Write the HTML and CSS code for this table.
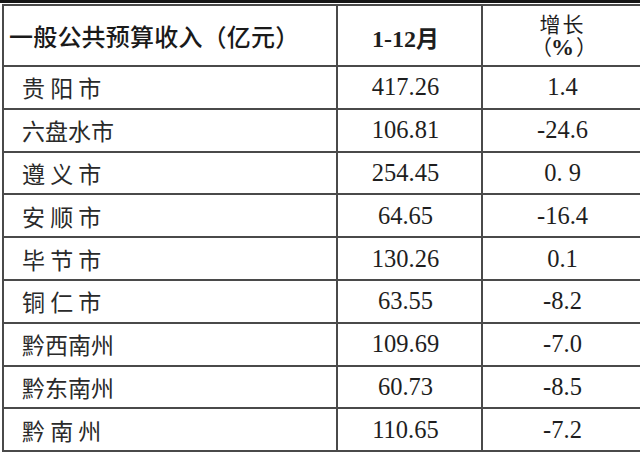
FILE: index.html
```html
<!DOCTYPE html>
<html lang="zh-CN">
<head>
<meta charset="utf-8">
<link rel="stylesheet" href="styles.css">
</head>
<body>
<div class="page">
  <div class="topbar"></div>
  <table class="budget">
    <colgroup>
      <col class="c-name">
      <col class="c-val">
      <col class="c-pct">
    </colgroup>
    <thead>
      <tr class="head">
        <th class="name-h">一般公共预算收入（亿元）</th>
        <th class="val-h"><span class="num-b">1-12</span>月</th>
        <th class="pct-h"><span class="pct-line">增长</span><span class="pct-line"><span class="paren">（</span><span class="pc">%</span><span class="paren">）</span></span></th>
      </tr>
    </thead>
    <tbody>
      <tr><td class="name">贵 阳 市</td><td class="val">417.26</td><td class="pct">1.4</td></tr>
      <tr><td class="name">六盘水市</td><td class="val">106.81</td><td class="pct">-24.6</td></tr>
      <tr><td class="name">遵 义 市</td><td class="val">254.45</td><td class="pct">0. 9</td></tr>
      <tr><td class="name">安 顺 市</td><td class="val">64.65</td><td class="pct">-16.4</td></tr>
      <tr><td class="name">毕 节 市</td><td class="val">130.26</td><td class="pct">0.1</td></tr>
      <tr><td class="name">铜 仁 市</td><td class="val">63.55</td><td class="pct">-8.2</td></tr>
      <tr><td class="name">黔西南州</td><td class="val">109.69</td><td class="pct">-7.0</td></tr>
      <tr><td class="name">黔东南州</td><td class="val">60.73</td><td class="pct">-8.5</td></tr>
      <tr><td class="name">黔 南 州</td><td class="val">110.65</td><td class="pct">-7.2</td></tr>
    </tbody>
  </table>
</div>
</body>
</html>
```
FILE: styles.css
```css
html, body {
  margin: 0;
  padding: 0;
  background: #ffffff;
}
body {
  width: 640px;
  height: 458px;
  overflow: hidden;
  color: #1e1e1e;
  font-family: "Noto Sans CJK SC", "Noto Sans", sans-serif;
}
.page {
  width: 660px;
}
.topbar {
  height: 3px;
  background: #151515;
  margin-bottom: 1px;
}
.budget {
  border-collapse: collapse;
  margin-left: 2px;
  table-layout: fixed;
  width: 640px;
}
.c-name { width: 334px; }
.c-val { width: 145px; }
.c-pct { width: 161px; }
.budget th,
.budget td {
  border: 2px solid #4a4a4a;
  padding: 0;
  vertical-align: middle;
}
.budget .head {
  height: 61px;
}
.budget .name-h {
  text-align: left;
  padding-left: 5px;
  font-size: 24px;
  font-weight: 500;
  letter-spacing: 0.2px;
  color: #1a1a1a;
}
.budget .val-h {
  text-align: center;
  padding-right: 8px;
  padding-top: 2px;
  font-size: 23px;
  font-weight: 700;
  font-family: "Liberation Serif", "Noto Sans CJK SC", serif;
}
.num-b {
  font-family: "Liberation Serif", serif;
  font-weight: 700;
  font-size: 24px;
}
.budget .pct-h {
  text-align: center;
  font-size: 21px;
  font-weight: 400;
  letter-spacing: 2px;
  padding-top: 0;
}
.pct-line {
  display: block;
  line-height: 23px;
  white-space: nowrap;
}
.paren {
  display: inline-block;
  width: 18px;
  text-align: center;
  letter-spacing: 0;
}
.pc {
  font-family: "Liberation Serif", serif;
  font-weight: 700;
  font-size: 23px;
  letter-spacing: 0;
  padding: 0 2px;
}
.budget tbody tr {
  height: 42.8px;
}
.budget .name {
  padding-left: 18px;
  font-size: 23px;
  font-weight: 400;
  color: #2a2a2a;
  white-space: pre;
}
.budget .val,
.budget .pct {
  text-align: center;
  font-family: "Liberation Serif", serif;
  font-size: 24.5px;
  color: #1e1e1e;
}
.budget .val {
  padding-right: 8px;
}
```
